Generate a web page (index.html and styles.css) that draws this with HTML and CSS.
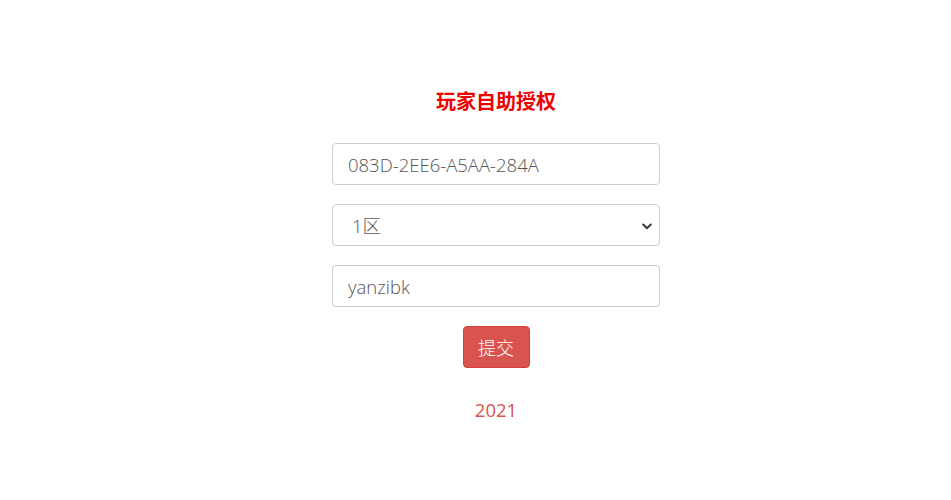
FILE: index.html
```html
<!DOCTYPE html>
<html lang="zh">
<head>
<meta charset="utf-8">
<title>玩家自助授权</title>
<link rel="stylesheet" href="styles.css">
</head>
<body>
<main class="wrap">
  <h1 class="title">玩家自助授权</h1>
  <form class="form">
    <input class="field" type="text" value="083D-2EE6-A5AA-284A">
    <div class="select-box">
      <select class="field select">
        <option>1区</option>
      </select>
      <svg class="chev" width="10" height="7" viewBox="0 0 10 7"><path d="M1.2 1.5 L5 5.2 L8.8 1.5" fill="none" stroke="#343a40" stroke-width="2" stroke-linecap="round" stroke-linejoin="round"/></svg>
    </div>
    <input class="field" type="text" value="yanzibk">
    <button class="btn" type="button">提交</button>
  </form>
  <p class="year">2021</p>
</main>
</body>
</html>
```
FILE: styles.css
```css
* { box-sizing: border-box; }
html, body { margin: 0; padding: 0; background: #fff; }
body {
  font-family: "Open Sans", "Noto Sans CJK SC", sans-serif;
  font-weight: 300;
}
.wrap {
  display: flex;
  flex-direction: column;
  align-items: center;
  padding-top: 86px;
  padding-left: 41px;
}
.title {
  margin: 0;
  font-size: 20px;
  line-height: 30px;
  font-weight: 700;
  color: #ee0000;
  font-family: "Noto Sans CJK SC", sans-serif;
}
.form {
  width: 328px;
  margin-top: 27px;
  display: flex;
  flex-direction: column;
  align-items: center;
  gap: 19px;
}
.field {
  width: 100%;
  height: 42px;
  border: 1px solid #ccc;
  border-radius: 4px;
  padding: 0 15px;
  font-family: "Open Sans", "Noto Sans CJK SC", sans-serif;
  font-weight: 300;
  font-size: 18.5px;
  color: #555;
  background: #fff;
  outline: none;
}
.select-box { position: relative; width: 100%; }
.select {
  appearance: none;
  -webkit-appearance: none;
  padding-left: 19px;
}
.chev {
  position: absolute;
  right: 8px;
  top: 19px;
}
.btn {
  width: 67px;
  height: 42px;
  border: 1px solid #d43f3a;
  border-radius: 4px;
  background: #d9534f;
  color: #fff;
  font-family: "Noto Sans CJK SC", sans-serif;
  font-weight: 300;
  font-size: 18px;
  padding: 0;
}
.year {
  margin: 30px 0 0 0;
  font-size: 18.5px;
  font-weight: 400;
  color: #d9534f;
  line-height: 24px;
}
```
